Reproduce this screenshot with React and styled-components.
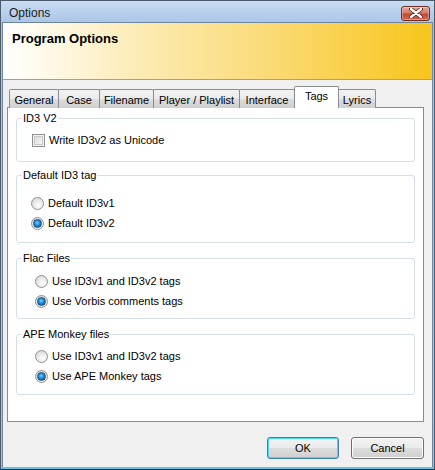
import React from 'react'
import styled, { createGlobalStyle, css } from 'styled-components'

const Global = createGlobalStyle`
	html, body { margin: 0; padding: 0; background: #fff; }
	body { font-family: "Liberation Sans", Arial, sans-serif; font-size: 11px; color: #000; }
	* { box-sizing: border-box; }
`

const tabs = [
	{ name: 'General', w: 50 },
	{ name: 'Case', w: 42 },
	{ name: 'Filename', w: 55 },
	{ name: 'Player / Playlist', w: 87 },
	{ name: 'Interface', w: 56 },
	{ name: 'Tags', w: 45, active: true },
	{ name: 'Lyrics', w: 38 },
]

const groups = [
	{ title: 'ID3 V2', h: 44, pad: 12, gap: 0, indent: 15, type: 'check', items: [{ label: 'Write ID3v2 as Unicode' }] },
	{ title: 'Default ID3 tag', h: 68, pad: 18, gap: 13, indent: 14, type: 'radio', items: [{ label: 'Default ID3v1' }, { label: 'Default ID3v2', on: true }] },
	{ title: 'Flac Files', h: 61, pad: 13, gap: 15, indent: 18, type: 'radio', items: [{ label: 'Use ID3v1 and ID3v2 tags' }, { label: 'Use Vorbis comments tags', on: true }] },
	{ title: 'APE Monkey files', h: 61, pad: 12, gap: 15, indent: 18, type: 'radio', items: [{ label: 'Use ID3v1 and ID3v2 tags' }, { label: 'Use APE Monkey tags', on: true }] },
]

export default function App() {
	return <>
		<Global />
		<Window>
			<TitleBar>
				<Caption>Options</Caption>
				<CloseButton>
					<svg width="14" height="10" viewBox="0 0 14 10">
						<path d="M2 1 L12 9 M12 1 L2 9" stroke="#5a2018" strokeWidth="4" strokeLinecap="round" />
						<path d="M2 1 L12 9 M12 1 L2 9" stroke="#fff" strokeWidth="2.4" strokeLinecap="round" />
					</svg>
				</CloseButton>
			</TitleBar>
			<Client>
				<Header>Program Options</Header>
				<Body>
					<TabRow>
						{tabs.map(t => <Tab key={t.name} $w={t.w} $active={t.active}>{t.name}</Tab>)}
					</TabRow>
					<Panel>
						{groups.map(g =>
							<Group key={g.title} $h={g.h} $pad={g.pad} $gap={g.gap} $indent={g.indent}>
								<Legend>{g.title}</Legend>
								{g.items.map(it =>
									<Option key={it.label}>
										{g.type === 'check' ? <CheckBox /> : <Radio $on={it.on} />}
										<span>{it.label}</span>
									</Option>
								)}
							</Group>
						)}
					</Panel>
					<Footer>
						<Button $default>OK</Button>
						<Button $w={73}>Cancel</Button>
					</Footer>
				</Body>
			</Client>
		</Window>
	</>
}
// --------------------------------------------------------
const Window = styled.div`
	width: 435px;
	height: 470px;
	border: 1px solid #4d5a6a;
	background: linear-gradient(180deg, #c9dcf2 0px, #a9c5e7 22px, #a3c3e6 100%);
	padding: 0 1px 1px 1px;
	display: flex;
	flex-direction: column;
	border-bottom-color: #2a2f36;
	box-shadow: inset 0 -2px 0 #5fc2ea;
`
// --------------------------------------------------------
const TitleBar = styled.div`
	height: 21px;
	display: flex;
	align-items: center;
	justify-content: space-between;
	padding: 0 3px 0 7px;
`
// --------------------------------------------------------
const Caption = styled.span`
	font-size: 12px;
	color: #1b1b1b;
	margin-top: 2px;
`
// --------------------------------------------------------
const CloseButton = styled.div`
	width: 29px;
	height: 15px;
	margin-top: 3px;
	border: 1px solid #6b2c22;
	border-radius: 3px;
	background: linear-gradient(180deg, #e8a898 0%, #d77863 45%, #c34a33 55%, #cf6a50 100%);
	box-shadow: inset 0 0 0 1px rgba(255,255,255,0.35);
	display: flex;
	align-items: center;
	justify-content: center;
`
// --------------------------------------------------------
const Client = styled.div`
	flex: 1;
	border: 1px solid #6f86a3;
	border-bottom: none;
	display: flex;
	flex-direction: column;
	background: #f0f0f0;
	margin-bottom: 1px;
`
// --------------------------------------------------------
const Header = styled.div`
	height: 57px;
	border-bottom: 1px solid #a0a0a0;
	background: linear-gradient(90deg, #ffffff 0%, #fff8e4 12%, #fce9ad 35%, #fbdc7c 60%, #f9cd3e 85%, #f8c51c 100%);
	font-size: 13px;
	font-weight: bold;
	padding: 8px 0 0 9px;
`
// --------------------------------------------------------
const Body = styled.div`
	flex: 1;
	display: flex;
	flex-direction: column;
	padding: 7px 8px 8px 4px;
`
// --------------------------------------------------------
const TabRow = styled.div`
	display: flex;
	align-items: flex-end;
	height: 21px;
	padding-left: 2px;
	position: relative;
	z-index: 1;
	margin-bottom: -1px;
`
// --------------------------------------------------------
const Tab = styled.div`
	width: ${p => p.$w}px;
	height: 19px;
	margin-right: -1px;
	border: 1px solid #898c95;
	border-bottom: none;
	border-radius: 2px 2px 0 0;
	background: linear-gradient(180deg, #f2f2f2 0%, #ebebeb 50%, #dddddd 51%, #cfcfcf 100%);
	display: flex;
	align-items: center;
	justify-content: center;
	padding-top: 1px;
	white-space: nowrap;
	${p => p.$active && css`
		height: 22px;
		background: #fff;
		align-items: flex-start;
		padding-top: 3px;
		position: relative;
		z-index: 2;
	`}
`
// --------------------------------------------------------
const Panel = styled.div`
	height: 315px;
	border: 1px solid #898c95;
	background: #fff;
	padding: 10px 8px 0 8px;
	display: flex;
	flex-direction: column;
`
// --------------------------------------------------------
const Group = styled.div`
	position: relative;
	height: ${p => p.$h}px;
	margin-top: ${p => p.$gap}px;
	border: 1px solid #d5dfe5;
	border-radius: 3px;
	padding: ${p => p.$pad - 1}px 0 0 ${p => p.$indent}px;
`
// --------------------------------------------------------
const Legend = styled.span`
	position: absolute;
	top: -7px;
	left: 5px;
	padding: 0 1px;
	background: #fff;
	line-height: 13px;
`
// --------------------------------------------------------
const Option = styled.div`
	height: 20px;
	display: flex;
	align-items: center;
	gap: 4px;
`
// --------------------------------------------------------
const CheckBox = styled.span`
	width: 13px;
	height: 13px;
	border: 1px solid #8f8f8f;
	background: linear-gradient(135deg, #d8d8d8 0%, #f4f4f4 80%, #ffffff 100%);
	box-shadow: inset 0 0 0 1px #f4f4f4, inset 0 0 0 2px #c8c8c8;
`
// --------------------------------------------------------
const Radio = styled.span`
	width: 13px;
	height: 13px;
	border-radius: 50%;
	border: 1px solid #939393;
	background: radial-gradient(circle at 60% 65%, #ffffff 0%, #eaeaea 45%, #cfcfcf 100%);
	display: flex;
	align-items: center;
	justify-content: center;
	${p => p.$on && css`
		&::after {
			content: '';
			width: 7px;
			height: 7px;
			border-radius: 50%;
			border: 1px solid #1c4c7c;
			background: radial-gradient(circle at 45% 40%, #7fd0fa 0%, #1d8ad4 45%, #0b4d8c 100%);
		}
	`}
`
// --------------------------------------------------------
const Footer = styled.div`
	margin-top: auto;
	display: flex;
	justify-content: flex-end;
	gap: 12px;
`
// --------------------------------------------------------
const Button = styled.button`
	width: ${p => p.$w || 72}px;
	height: 22px;
	font-family: inherit;
	font-size: 11px;
	color: #000;
	border: 1px solid #707070;
	border-radius: 3px;
	background: linear-gradient(180deg, #f2f2f2 0%, #ebebeb 50%, #dddddd 51%, #cfcfcf 100%);
	box-shadow: inset 0 0 0 1px #fcfcfc;
	padding: 0;
	${p => p.$default && css`
		border-color: #3c7fb1;
		box-shadow: inset 0 0 0 1px #48d8fb;
	`}
`
// --------------------------------------------------------
